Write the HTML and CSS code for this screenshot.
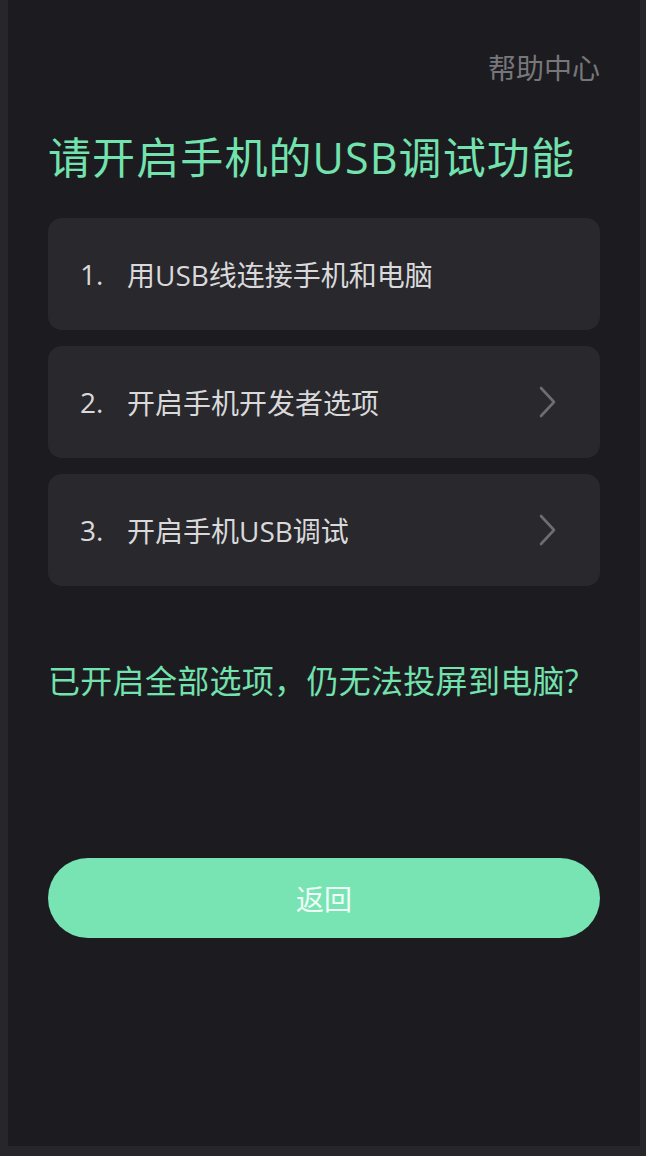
FILE: index.html
```html
<!DOCTYPE html>
<html lang="zh-CN">
<head>
<meta charset="utf-8">
<title>USB调试</title>
<link rel="stylesheet" href="styles.css">
</head>
<body>
<main class="screen">
  <header class="topbar">
    <a class="help">帮助中心</a>
  </header>
  <h1 class="title">请开启手机的USB调试功能</h1>
  <ul class="steps">
    <li class="step">
      <span class="num">1.</span>
      <span class="label">用USB线连接手机和电脑</span>
    </li>
    <li class="step">
      <span class="num">2.</span>
      <span class="label">开启手机开发者选项</span>
      <svg class="chev" width="24" height="36" viewBox="0 0 24 36"><path d="M5 4 L18 18 L5 32" fill="none" stroke="#6e6e72" stroke-width="2.6" stroke-linecap="round" stroke-linejoin="round"/></svg>
    </li>
    <li class="step">
      <span class="num">3.</span>
      <span class="label">开启手机USB调试</span>
      <svg class="chev" width="24" height="36" viewBox="0 0 24 36"><path d="M5 4 L18 18 L5 32" fill="none" stroke="#6e6e72" stroke-width="2.6" stroke-linecap="round" stroke-linejoin="round"/></svg>
    </li>
  </ul>
  <p class="fail">已开启全部选项，仍无法投屏到电脑?</p>
  <button class="back">返回</button>
</main>
</body>
</html>
```
FILE: styles.css
```css
html {
  background: #27272b;
}
body {
  margin: 0 6px 10px 8px;
  font-family: "Open Sans", "Noto Sans CJK SC", sans-serif;
}
.screen {
  background: #1c1c20;
  height: 1146px;
  box-sizing: border-box;
  padding: 48px 40px 0 40px;
  display: flex;
  flex-direction: column;
}
.topbar {
  display: flex;
  justify-content: flex-end;
  height: 40px;
}
.help {
  font-size: 28px;
  line-height: 40px;
  color: #77777b;
}
.title {
  margin: 42px 0 32px;
  font-size: 43px;
  line-height: 56px;
  font-weight: 400;
  letter-spacing: 1.1px;
  color: #72e2ae;
}
.steps {
  list-style: none;
  margin: 0;
  padding: 0;
  display: flex;
  flex-direction: column;
  gap: 16px;
}
.step {
  height: 112px;
  background: #28282d;
  border-radius: 14px;
  display: flex;
  align-items: center;
  padding: 0 40px 0 32px;
  color: #d9d9db;
  font-size: 28px;
}
.num {
  width: 47px;
}
.label {
  flex: 1;
}
.chev {
  display: block;
}
.fail {
  margin: 71px 0 0;
  font-size: 32px;
  line-height: 48px;
  letter-spacing: 0.3px;
  color: #72e2ae;
}
.back {
  margin-top: 153px;
  height: 80px;
  border: none;
  border-radius: 40px;
  background: #78e4b4;
  color: #f2fff8;
  font-family: inherit;
  font-size: 28px;
}
```
